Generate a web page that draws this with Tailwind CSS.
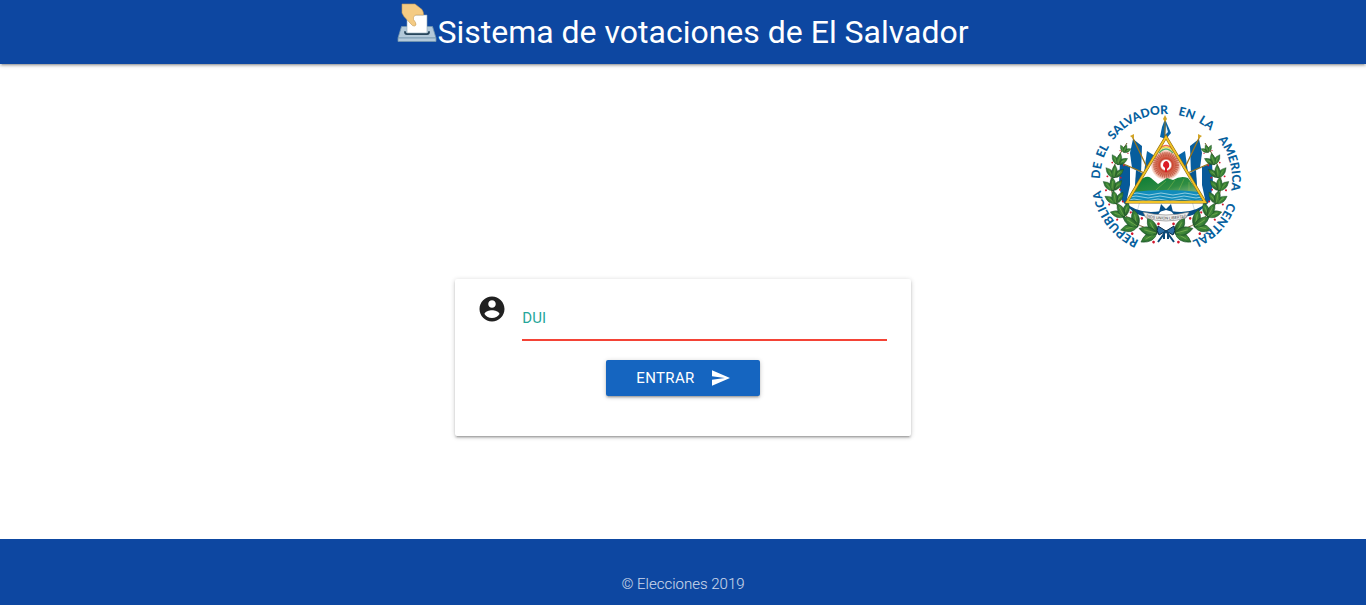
<!DOCTYPE html>
<html lang="es">
<head>
<meta charset="utf-8">
<meta name="viewport" content="width=device-width, initial-scale=1">
<title>Sistema de votaciones de El Salvador</title>
<script src="https://cdn.jsdelivr.net/npm/@tailwindcss/browser@4"></script>
</head>
<body class="flex min-h-screen flex-col bg-white font-[Roboto,sans-serif] text-[15px] text-black/87">
<header class="relative flex h-16 items-center justify-center bg-[#0d47a1] text-white shadow-[0_2px_2px_0_rgba(0,0,0,0.14),0_3px_1px_-2px_rgba(0,0,0,0.12),0_1px_5px_0_rgba(0,0,0,0.2)]">
  <a href="#" class="flex items-center">
    <svg class="mb-[18px] h-10 w-10" viewBox="0 0 40 40" aria-hidden="true">
      <path d="M4.500 23.500h31l3.500 11.500h-38z" fill="#b3c9d9" stroke="#7597ae" stroke-width=".8"/>
      <path d="M1 35h38v3.500H1z" fill="#b3c9d9" stroke="#7597ae" stroke-width=".8"/>
      <path d="M8 29q0 2 2 2h20q2 0 2-2" fill="none" stroke="#28465b" stroke-width="1.800" stroke-linecap="round"/>
      <path d="M10 12h20v18H10z" fill="#fff" stroke="#8fa9bb" stroke-width=".6"/>
      <path d="M5 1h13l7 5.500q2 3 1.500 5.500H18.500q-3 2-2 4.500l2 3q1.500 3-1 3.500-2 .3-3.500-2L7 13.500 5 10z" fill="#f4cb84" stroke="#c29a5b" stroke-width=".6"/>
    </svg>
    <h1 class="text-[32px] leading-[64px] font-normal whitespace-nowrap">Sistema de votaciones de El Salvador</h1>
  </a>
</header>

<main class="flex grow flex-col">
  <div class="flex justify-end pt-[41px] pr-[125px]">
    <svg class="h-[150px] w-[150px] overflow-visible" viewBox="0 0 150 150" role="img" aria-label="Escudo de El Salvador">
      <defs>
        <path id="ring" d="M75 141A66 66 0 0 1 75 9A66 66 0 0 1 75 141"/>
        <path id="motto" d="M54 112Q75 117 97 112"/>
        <radialGradient id="sun"><stop offset=".3" stop-color="#fff"/><stop offset=".42" stop-color="#c9432d"/><stop offset=".75" stop-color="#df8c75"/><stop offset="1" stop-color="#fbe5dc"/></radialGradient>
        <linearGradient id="hill" x1="0" x2="1" y1="0" y2="1"><stop offset="0" stop-color="#087b35"/><stop offset=".6" stop-color="#2f8c42"/><stop offset="1" stop-color="#8dbb88"/></linearGradient>
        <linearGradient id="leafFill" x1="0" x2="1" y1="0" y2="1"><stop offset="0" stop-color="#1a5c2c"/><stop offset=".5" stop-color="#438c38"/><stop offset="1" stop-color="#143f20"/></linearGradient>
        <g id="leaf"><path d="M0 1Q-6-5 0-13Q6-5 0 1Z" fill="url(#leafFill)" stroke="#164e27" stroke-width=".4"/><path d="M0 0V-9" stroke="#7fb457" stroke-width=".5"/></g>
        <g id="sprig">
          <use href="#leaf" transform="rotate(-46)"/><use href="#leaf" transform="rotate(46)"/><use href="#leaf"/>
          <circle cx="-7" cy="0" r="1" fill="#d3172e"/><circle cx="7" cy="0" r="1" fill="#d3172e"/>
        </g>
        <g id="half">
          <path d="M42 35L63 48 55 75 41 63Z" fill="#fff"/>
          <path d="M42 34L51 41 50 69 41 63 39 48Z" fill="#075d9d"/>
          <path d="M56 46L64 51 58 70 53 68Z" fill="#0866a8"/>
          <path d="M29 58L56 70 50 92 45 111 35 102 30 85Z" fill="#fff" stroke="#8aa5b8" stroke-width=".4"/>
          <path d="M29 58L39 62 39 80 36 94 39 104 31 96 28 79Z" fill="#075a99"/>
          <path d="M45 65L56 71 50 83 43 95Z" fill="#065891"/>
          <path d="M33 96Q46 110 70 106L66 111Q44 115 33 96Z" fill="#064f87"/>
          <path d="M41 31L61 73M28 57L58 70" stroke="#9b7419" stroke-width="1.300"/>
          <path d="M39 31L43 29 43 34ZM26 56L30 54 31 59Z" fill="#d3a526"/>
          <path d="M36 38Q18 62 20 83Q25 116 69 128" fill="none" stroke="#725a2c" stroke-width="1"/>
          <use href="#sprig" transform="translate(33 47) rotate(20) scale(.6)"/>
          <use href="#sprig" transform="translate(27 59) rotate(14) scale(.85)"/>
          <use href="#sprig" transform="translate(23 72) rotate(5) scale(.95)"/>
          <use href="#sprig" transform="translate(22 85) rotate(-3)"/>
          <use href="#sprig" transform="translate(25 98) rotate(-13)"/>
          <use href="#sprig" transform="translate(33 111) rotate(-28) scale(1.100)"/>
          <use href="#sprig" transform="translate(46 121) rotate(-58) scale(1.300)"/>
          <use href="#sprig" transform="translate(65 128) rotate(-75) scale(1.350)"/>
        </g>
      </defs>
      <path d="M74 14L80 28 75 34 69 32 71 22Z" fill="#0765a8"/>
      <path d="M75 20L77 27 74 30Z" fill="#e7f1f8"/>
      <path d="M74 12V34" stroke="#9b7419" stroke-width="1"/>
      <path d="M72 14L74 10 76 14 74 17Z" fill="#d3a526"/>
      <use href="#half"/>
      <use href="#half" transform="translate(150 0) scale(-1 1)"/>
      <path d="M75 32L114 97H36Z" fill="#fff"/>
      <circle cx="75" cy="60" r="15" fill="url(#sun)"/>
      <circle cx="75" cy="60" r="11" fill="none" stroke="#ad301e" stroke-width="4" stroke-dasharray="1 1" opacity=".5"/>
      <circle cx="75" cy="60" r="5" fill="#fff"/>
      <path d="M72 61Q72 56 76 56Q79 58 78 62L76 64 76 67H74V63Z" fill="#dc1c25"/>
      <path d="M69 44Q75 37 81 44" fill="none" stroke="#ee6a52" stroke-width="1.500"/>
      <path d="M68 46Q75 38 82 46" fill="none" stroke="#f3d74b" stroke-width="1.500"/>
      <path d="M68 48Q75 40 82 48" fill="none" stroke="#5aac68" stroke-width="1.500"/>
      <path d="M41 88L48 77Q55 69 60 73L67 79 76 73 82 75Q90 70 97 73L109 89Z" fill="url(#hill)"/>
      <path d="M65 85L75 76M76 86L84 75M87 87L93 74M98 87L98 77" stroke="#a0c64f" stroke-width=".8" opacity=".5"/>
      <path d="M41 87Q75 83 109 87L114 97H36Z" fill="#118cbb"/>
      <path d="M40 89q6-2 12 0t12 0 12 0 12 0 12 0 9 0M39 92q6-2 12 0t12 0 12 0 12 0 12 0 12 0M37 95q6-2 12 0t12 0 12 0 12 0 12 0 14 0" fill="none" stroke="#9ed5e5" stroke-width=".9"/>
      <path d="M75 32L114 97H36Z" fill="none" stroke="#8b6a13" stroke-width="3"/>
      <path d="M75 32L114 97H36Z" fill="none" stroke="#f3c325" stroke-width="1.800"/>
      <path d="M70 99L75 104 80 99 82 107 75 105 68 107Z" fill="#064f87"/>
      <path d="M52 107Q75 113 98 107L95 113Q75 119 55 113Z" fill="#eee" stroke="#777" stroke-width=".6"/>
      <text class="fill-[#444] font-[Roboto,sans-serif] text-[4px]" text-anchor="middle"><textPath href="#motto" startOffset="50%">DIOS UNION LIBERTAD</textPath></text>
      <path d="M75 126L67 121Q65 126 68 130ZM75 126L83 121Q85 126 82 130Z" fill="#2c6fa5" stroke="#082a47"/>
      <path d="M75 126L67 137M75 126L83 137M73 127V134M77 127V134" stroke="#0a4877" stroke-width="2"/>
      <g class="fill-[#065f9e] font-[Lato,sans-serif] text-[12px] font-black" text-anchor="middle">
        <text><textPath href="#ring" startOffset="14.600%">REPUBLICA</textPath></text>
        <text><textPath href="#ring" startOffset="27.200%">DE</textPath></text>
        <text><textPath href="#ring" startOffset="31.900%">EL</textPath></text>
        <text><textPath href="#ring" startOffset="42.900%">SALVADOR</textPath></text>
        <text><textPath href="#ring" startOffset="54.900%">EN</textPath></text>
        <text><textPath href="#ring" startOffset="59.900%">LA</textPath></text>
        <text><textPath href="#ring" startOffset="71%">AMERICA</textPath></text>
        <text><textPath href="#ring" startOffset="87%">CENTRAL</textPath></text>
      </g>
    </svg>
  </div>

  <form class="mx-auto mt-6 mb-8 w-1/3 min-w-80 rounded-[2px] bg-white px-6 pt-3 pb-10 shadow-[0_2px_2px_0_rgba(0,0,0,0.14),0_3px_1px_-2px_rgba(0,0,0,0.12),0_1px_5px_0_rgba(0,0,0,0.2)]">
    <div class="flex items-start gap-[14px]">
      <svg class="-ml-[2px] mt-[3px] h-[30px] w-[30px] shrink-0" viewBox="0 0 24 24" fill="#212121" aria-hidden="true"><path d="M12 2C6.480 2 2 6.480 2 12s4.480 10 10 10 10-4.480 10-10S17.520 2 12 2zm0 3c1.660 0 3 1.340 3 3s-1.340 3-3 3-3-1.340-3-3 1.340-3 3-3zm0 14.200c-2.500 0-4.710-1.280-6-3.220.03-1.990 4-3.080 6-3.080 1.990 0 5.970 1.090 6 3.080-1.290 1.940-3.500 3.220-6 3.220z"/></svg>
      <div class="ml-px grid grow border-b-2 border-[#f44336]">
        <label for="dui" class="col-start-1 row-start-1 self-center pt-[6px] leading-[18px] text-[#26a69a]">DUI</label>
        <input id="dui" type="text" name="dui" class="col-start-1 row-start-1 h-12 w-full bg-transparent pt-[6px] outline-none">
      </div>
    </div>
    <div class="mt-[19px] flex justify-center">
      <button type="submit" class="flex h-9 items-center gap-[17px] rounded-[2px] bg-[#1565c0] px-[30px] tracking-wide text-white uppercase shadow-[0_2px_2px_0_rgba(0,0,0,0.14),0_3px_1px_-2px_rgba(0,0,0,0.12),0_1px_5px_0_rgba(0,0,0,0.2)]">
        Entrar
        <svg class="h-4 w-[18px]" viewBox="2 3 21 18" fill="currentColor" aria-hidden="true"><path d="M2.010 21L23 12 2.010 3 2 10l15 2-15 2z"/></svg>
      </button>
    </div>
  </form>
</main>

<footer class="bg-[#0d47a1] px-4 pt-[33px] pb-[9px] text-center leading-6 font-light text-white/80">© Elecciones 2019</footer>
</body>
</html>
